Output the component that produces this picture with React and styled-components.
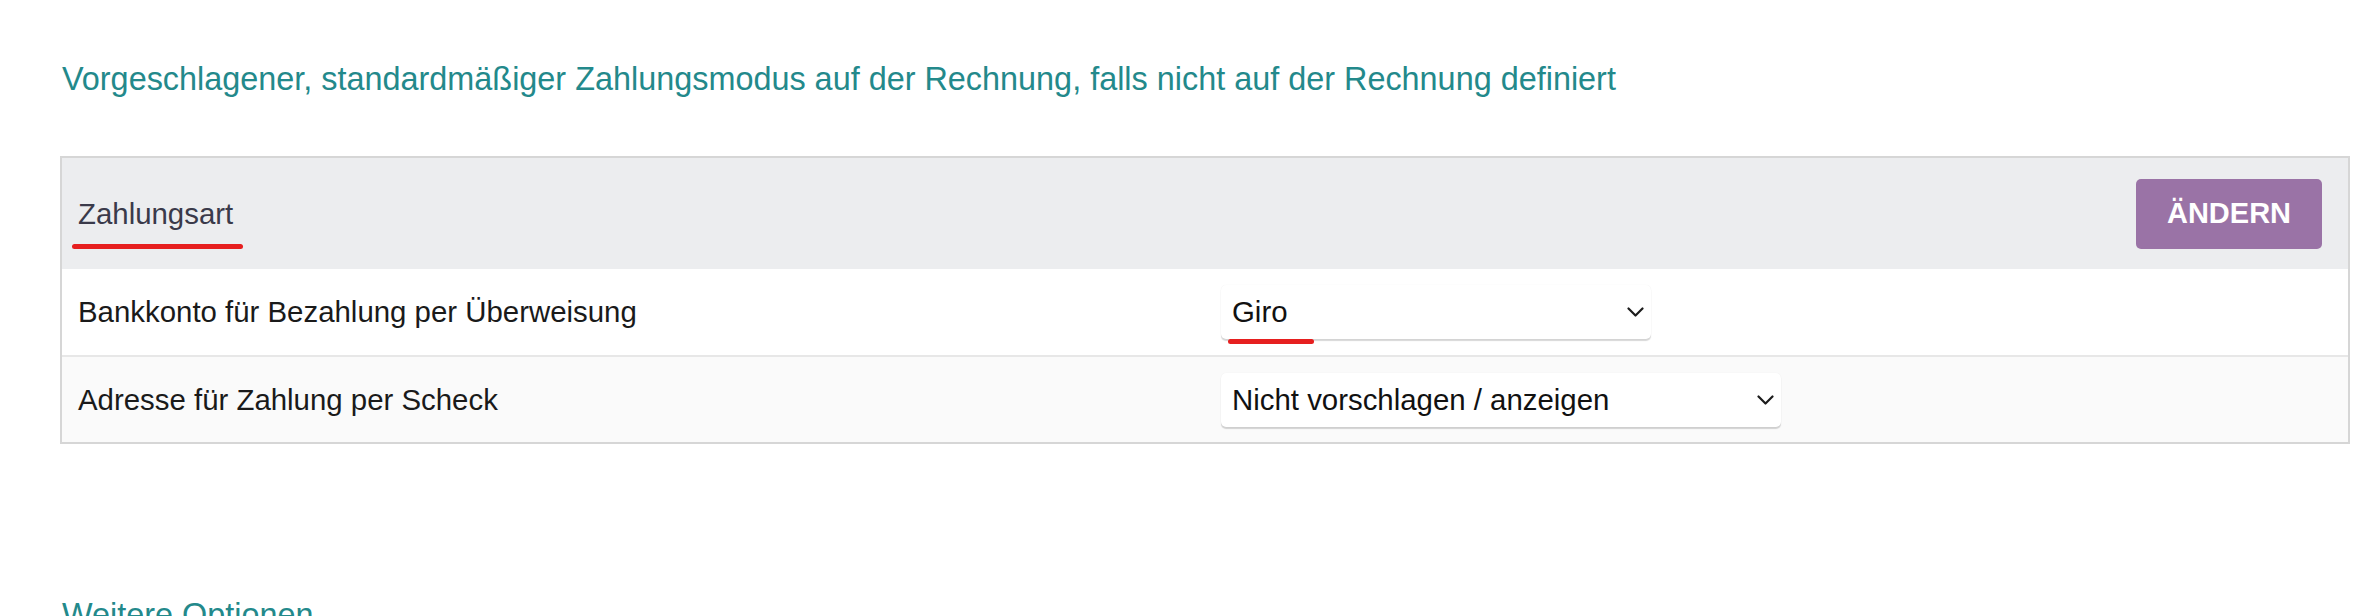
import React from 'react';
import styled, { createGlobalStyle } from 'styled-components';

const GlobalStyle = createGlobalStyle`
  body {
    margin: 0;
    background: #fff;
    font-family: "Liberation Sans", Arial, sans-serif;
  }
`;

const Page = styled.div`
  padding: 60px 26px 0 60px;
`;

const Title = styled.h2`
  margin: 0 0 58px;
  padding-left: 2px;
  font-size: 32.4px;
  line-height: 38px;
  font-weight: normal;
  color: #23898b;
`;

const Panel = styled.section`
  border: 2px solid #d6d6d6;
`;

const PanelHeader = styled.div`
  display: flex;
  align-items: center;
  justify-content: space-between;
  height: 111px;
  padding: 0 26px 0 16px;
  background: #ecedef;
`;

const HeaderLabel = styled.span`
  font-size: 29.4px;
  color: #3a3a4a;
`;

const Button = styled.button`
  width: 186px;
  height: 70px;
  border: 0;
  border-radius: 5px;
  background: #9a73a6;
  color: #fff;
  font-family: inherit;
  font-size: 29px;
  font-weight: bold;
  cursor: pointer;
`;

const Row = styled.div`
  display: grid;
  grid-template-columns: 1143px 1fr;
  align-items: center;
  height: ${(p) => p.$height}px;
  padding-left: 16px;
  background: ${(p) => (p.$alt ? '#fafafa' : '#fff')};
  border-top: ${(p) => (p.$first ? '0' : '2px solid #e7e7e7')};
`;

const Label = styled.span`
  font-size: 29.4px;
  color: #1a1a1a;
`;

const Select = styled.div`
  display: flex;
  align-items: center;
  justify-content: space-between;
  box-sizing: border-box;
  width: ${(p) => p.$width}px;
  height: 54px;
  padding: 0 7px 0 11px;
  background: #fff;
  border-radius: 5px;
  box-shadow: 0 0 1px rgba(0, 0, 0, 0.08), 0 2px 1px rgba(0, 0, 0, 0.16);
  font-size: 29.4px;
  color: #111;
`;

const Marked = styled.span`
  position: relative;
  display: inline-block;
  &::after {
    content: '';
    position: absolute;
    top: ${(p) => p.$top}px;
    left: ${(p) => p.$left}px;
    right: ${(p) => p.$right}px;
    height: 5px;
    border-radius: 3px;
    background: #e61f1f;
  }
`;

const Subtitle = styled.h3`
  margin: 152px 0 0;
  padding-left: 2px;
  font-size: 32.4px;
  line-height: 38px;
  font-weight: normal;
  color: #23898b;
`;

const Chevron = () => (
  <svg width="17" height="10" viewBox="0 0 17 10" fill="none">
    <polyline
      points="1.5,1.5 8.5,8.5 15.5,1.5"
      stroke="#1c1c1c"
      strokeWidth="2.2"
      strokeLinecap="round"
      strokeLinejoin="round"
    />
  </svg>
);

export default function App() {
  return (
    <Page>
      <GlobalStyle />
      <Title>
        Vorgeschlagener, standardmäßiger Zahlungsmodus auf der Rechnung, falls nicht auf der Rechnung definiert
      </Title>
      <Panel>
        <PanelHeader>
          <HeaderLabel>
            <Marked $top={47} $left={-6} $right={-10}>Zahlungsart</Marked>
          </HeaderLabel>
          <Button>ÄNDERN</Button>
        </PanelHeader>
        <Row $height={86} $first>
          <Label>Bankkonto für Bezahlung per Überweisung</Label>
          <Select $width={430}>
            <Marked $top={44} $left={-4} $right={-26}>Giro</Marked>
            <Chevron />
          </Select>
        </Row>
        <Row $height={85} $alt>
          <Label>Adresse für Zahlung per Scheck</Label>
          <Select $width={560}>
            <span>Nicht vorschlagen / anzeigen</span>
            <Chevron />
          </Select>
        </Row>
      </Panel>
      <Subtitle>Weitere Optionen</Subtitle>
    </Page>
  );
}
